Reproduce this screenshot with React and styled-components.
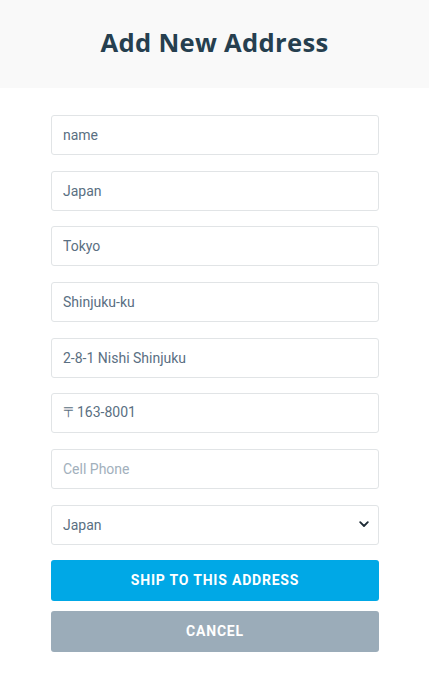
import React from "react";
import styled, { createGlobalStyle } from "styled-components";

const Global = createGlobalStyle`
  html, body { margin: 0; padding: 0; background: #ffffff; }
  body { font-family: Roboto, "Liberation Sans", sans-serif; }
  * { box-sizing: border-box; }
`;

const Page = styled.div`
  width: 429px;
  min-height: 685px;
  background: #ffffff;
`;

const Header = styled.header`
  height: 88px;
  background: #f9f9f9;
  display: flex;
  align-items: center;
  justify-content: center;
  padding-bottom: 4px;
`;

const Title = styled.h1`
  margin: 0;
  font-family: "Open Sans", "Noto Sans", sans-serif;
  font-weight: 700;
  font-size: 25.6px;
  letter-spacing: 0.3px;
  color: #263f4f;
`;

const Form = styled.form`
  display: flex;
  flex-direction: column;
  padding: 27px 50px 0 51px;
`;

const Fields = styled.div`
  display: flex;
  flex-direction: column;
  gap: 15.7px;
`;

const Input = styled.input`
  width: 100%;
  height: 40px;
  border: 1px solid #e1e4e6;
  border-radius: 3px;
  padding: 0 11px;
  font-family: Roboto, "Liberation Sans", sans-serif;
  font-size: 14px;
  color: #5a6f82;
  background: #fff;
  outline: none;
  &::placeholder { color: #a2b0bc; }
`;

const SelectWrap = styled.div`
  position: relative;
  height: 40px;
`;

const Select = styled.select`
  width: 100%;
  height: 40px;
  appearance: none;
  -webkit-appearance: none;
  border: 1px solid #e1e4e6;
  border-radius: 3px;
  padding: 0 11px;
  font-family: Roboto, "Liberation Sans", sans-serif;
  font-size: 14px;
  color: #5a6f82;
  background: #fff;
  outline: none;
`;

const Chevron = styled.svg`
  position: absolute;
  right: 10px;
  top: 16px;
  pointer-events: none;
`;

const Buttons = styled.div`
  display: flex;
  flex-direction: column;
  gap: 10px;
  margin-top: 15px;
`;

const Button = styled.button`
  height: 41px;
  width: 100%;
  border: none;
  border-radius: 3px;
  background: ${(p) => (p.$variant === "primary" ? "#00a8e6" : "#9bacb9")};
  color: #ffffff;
  font-family: Roboto, "Liberation Sans", sans-serif;
  font-weight: 700;
  font-size: 14px;
  letter-spacing: 0.8px;
  text-transform: uppercase;
  cursor: pointer;
`;

export default function App() {
  return (
    <Page>
      <Global />
      <Header>
        <Title>Add New Address</Title>
      </Header>
      <Form onSubmit={(e) => e.preventDefault()}>
        <Fields>
          <Input defaultValue="name" />
          <Input defaultValue="Japan" />
          <Input defaultValue="Tokyo" />
          <Input defaultValue="Shinjuku-ku" />
          <Input defaultValue="2-8-1 Nishi Shinjuku" />
          <Input defaultValue="〒163-8001" />
          <Input placeholder="Cell Phone" />
          <SelectWrap>
            <Select defaultValue="Japan">
              <option>Japan</option>
              <option>United States</option>
            </Select>
            <Chevron width="10" height="7" viewBox="0 0 10 7">
              <path d="M1.2 1.2 L5 5 L8.8 1.2" fill="none" stroke="#1e2b35" strokeWidth="1.8" strokeLinecap="round" strokeLinejoin="round" />
            </Chevron>
          </SelectWrap>
        </Fields>
        <Buttons>
          <Button type="submit" $variant="primary">Ship to this address</Button>
          <Button type="button" $variant="secondary">Cancel</Button>
        </Buttons>
      </Form>
    </Page>
  );
}
